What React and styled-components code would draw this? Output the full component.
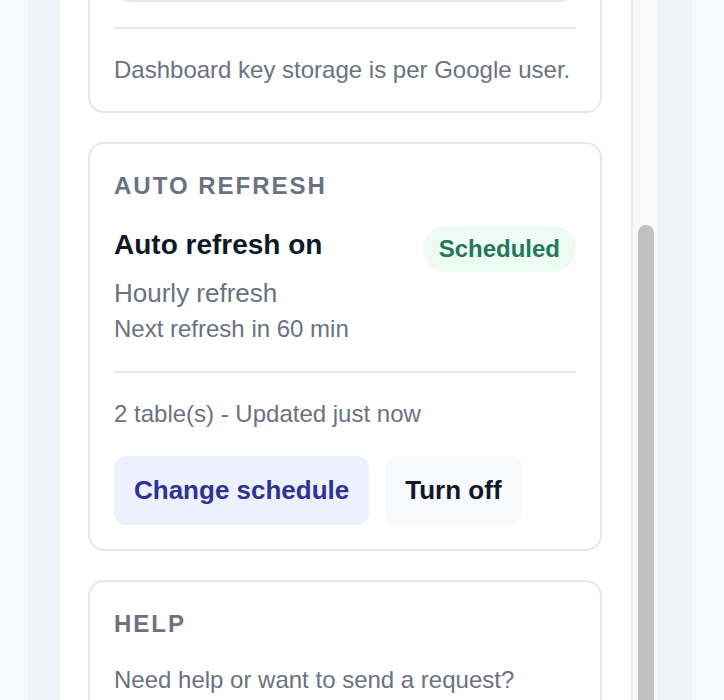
import React, { useLayoutEffect, useRef, useState } from "react";
import styled, { createGlobalStyle } from "styled-components";

const GlobalStyle = createGlobalStyle`
  html, body {
    margin: 0;
    height: 100%;
    overflow: hidden;
    background: #f7f9fc;
  }
  body {
    font-family: "Liberation Sans", Arial, Helvetica, sans-serif;
    -webkit-font-smoothing: antialiased;
  }
`;

const Shell = styled.div`
  height: 100vh;
  overflow: hidden;
  display: flex;
  padding: 0 32px 0 28px;
  box-sizing: border-box;
`;

const Frame = styled.div`
  flex: 1;
  display: flex;
  align-items: flex-start;
  background: #eff2f7;
  padding: 0 33px 0 32px;
`;

const Window = styled.div`
  flex: 1;
  display: flex;
  height: 700px;
  background: #fff;
`;

const ScrollArea = styled.div`
  flex: 1;
  min-width: 0;
  overflow-y: auto;
  scrollbar-width: none;
  box-sizing: border-box;
  padding: 28px 29px 28px 28px;
  display: flex;
  flex-direction: column;
  gap: 29px;

  &::-webkit-scrollbar {
    display: none;
  }
`;

const ScrollTrack = styled.div`
  position: relative;
  flex-shrink: 0;
  width: 28px;
  box-sizing: border-box;
  background: #f9f9f9;
  border-left: 2px solid #ebebeb;
  border-right: 1px solid #eeeeee;
`;

const Thumb = styled.div`
  position: absolute;
  left: 5px;
  width: 16px;
  border-radius: 8px;
  background: #c1c1c1;
`;

const Header = styled.header`
  flex-shrink: 0;
`;

const AppName = styled.h1`
  margin: 0;
  font-size: 32px;
  line-height: 40px;
  font-weight: 700;
  color: #111827;
`;

const Card = styled.section`
  flex-shrink: 0;
  border: 2px solid #e5e7eb;
  border-radius: 16px;
  padding: 24px;
  background: #fff;
`;

const CardHeading = styled.h2`
  margin: 0 0 22px;
  font-size: 24px;
  line-height: 36px;
  font-weight: 700;
  letter-spacing: 2px;
  text-transform: uppercase;
  color: #6b7280;
`;

const Muted = styled.p`
  margin: 0;
  font-size: ${(p) => p.$size || 24}px;
  line-height: ${(p) => p.$lh || 34}px;
  color: #6b7280;
`;

const KeyInput = styled.input`
  display: block;
  width: 100%;
  box-sizing: border-box;
  height: 60px;
  margin-top: 16px;
  padding: 0 18px;
  border: 2px solid #e5e7eb;
  border-radius: 16px;
  font-family: inherit;
  font-size: 24px;
  color: #111827;
  background: #fff;
`;

const Divider = styled.hr`
  border: 0;
  height: 2px;
  background: #e5e7eb;
  margin: 25px 0 24px;
`;

const StatusRow = styled.div`
  display: flex;
  justify-content: space-between;
  align-items: flex-start;
  gap: 16px;
`;

const StatusText = styled.div`
  display: flex;
  flex-direction: column;
`;

const StatusTitle = styled.h3`
  margin: 0 0 10px;
  font-size: 28px;
  line-height: 38px;
  font-weight: 700;
  color: #111827;
`;

const Pill = styled.span`
  flex-shrink: 0;
  padding: 8px 16px;
  border-radius: 999px;
  background: #edfbf4;
  color: #22785a;
  font-size: 24px;
  line-height: 30px;
  font-weight: 700;
`;

const Actions = styled.div`
  display: flex;
  gap: 16px;
  margin-top: 25px;
`;

const Button = styled.button`
  border: 0;
  border-radius: 12px;
  padding: 19px 20px;
  font-family: inherit;
  font-size: 26px;
  line-height: 31px;
  font-weight: 700;
  cursor: pointer;
  background: ${(p) => (p.$variant === "primary" ? "#edf1fd" : "#f8f9fb")};
  color: ${(p) => (p.$variant === "primary" ? "#2e3394" : "#111827")};
`;

const Footer = styled.footer`
  flex-shrink: 0;
  text-align: center;
`;

// where the thumb and the key divider sit in the reference view
const THUMB_TOP = 225;
const DIVIDER_Y = 27;

export default function App() {
  const scrollRef = useRef(null);
  const dividerRef = useRef(null);
  const offsetRef = useRef(0);
  const [view, setView] = useState(null);

  useLayoutEffect(() => {
    const area = scrollRef.current;
    const divider = dividerRef.current;
    const top =
      divider.getBoundingClientRect().top -
      area.getBoundingClientRect().top +
      area.scrollTop;
    const offset = top - DIVIDER_Y;
    offsetRef.current = offset;
    const content = area.scrollHeight;
    const height = Math.min(
      Math.round((THUMB_TOP * content) / offset),
      content - offset
    );
    setView({
      height,
      thumbTop: (offset * height) / content,
      thumbHeight: (height * height) / content,
    });
  }, []);

  useLayoutEffect(() => {
    if (view) scrollRef.current.scrollTop = offsetRef.current;
  }, [view]);

  return (
    <>
      <GlobalStyle />
      <Shell>
        <Frame>
          <Window style={view ? { height: view.height } : undefined}>
            <ScrollArea ref={scrollRef}>
              <Header>
                <AppName>Sheet Sync</AppName>
                <Muted>Connected to Google Sheets</Muted>
              </Header>

              <Card>
                <CardHeading>Dashboard key</CardHeading>
                <Muted>Paste the key from your dashboard.</Muted>
                <KeyInput readOnly value="••••••••••••••••4f2a" />
                <Divider ref={dividerRef} />
                <Muted>Dashboard key storage is per Google user.</Muted>
              </Card>

              <Card>
                <CardHeading>Auto refresh</CardHeading>
                <StatusRow>
                  <StatusText>
                    <StatusTitle>Auto refresh on</StatusTitle>
                    <Muted $size={26} $lh={38}>
                      Hourly refresh
                    </Muted>
                    <Muted>Next refresh in 60 min</Muted>
                  </StatusText>
                  <Pill>Scheduled</Pill>
                </StatusRow>
                <Divider />
                <Muted>2 table(s) - Updated just now</Muted>
                <Actions>
                  <Button $variant="primary">Change schedule</Button>
                  <Button>Turn off</Button>
                </Actions>
              </Card>

              <Card>
                <CardHeading>Help</CardHeading>
                <Muted $lh={32}>Need help or want to send a request?</Muted>
                <Actions>
                  <Button $variant="primary">Contact support</Button>
                </Actions>
              </Card>

              <Footer>
                <Muted>Version 1.8.2</Muted>
              </Footer>
            </ScrollArea>
            <ScrollTrack>
              {view && (
                <Thumb
                  style={{ top: view.thumbTop, height: view.thumbHeight }}
                />
              )}
            </ScrollTrack>
          </Window>
        </Frame>
      </Shell>
    </>
  );
}
